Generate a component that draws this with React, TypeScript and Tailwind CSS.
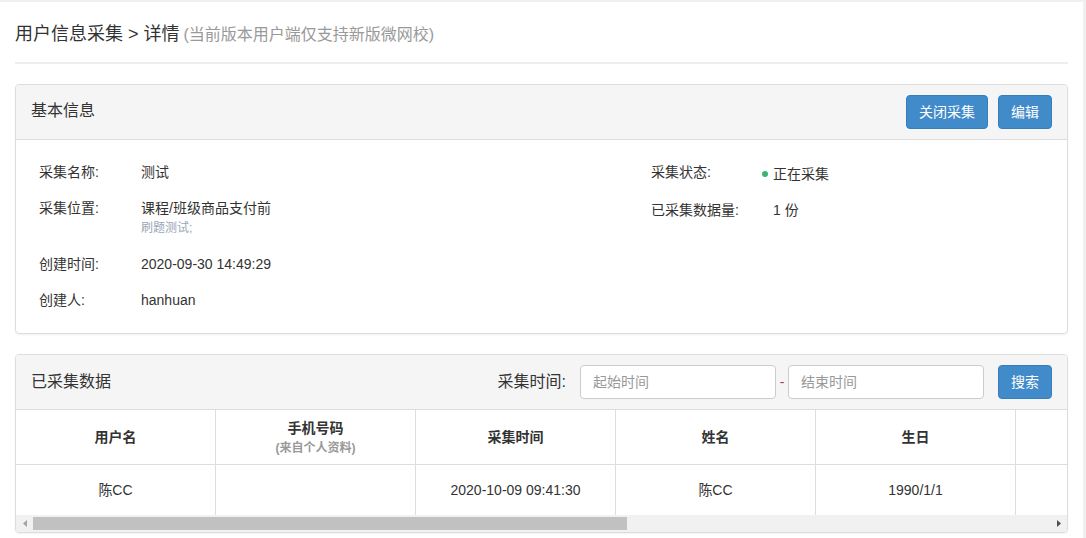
const font = { fontFamily: '"Liberation Sans", "Noto Sans CJK SC", sans-serif' }

function Row({ label, labelW, children }: { label: string; labelW: string; children: React.ReactNode }) {
  return (
    <div className="flex py-[8px]">
      <div className={`${labelW} shrink-0 leading-[20px] text-[#333]`}>{label}</div>
      <div className="leading-[20px] text-[#333]">{children}</div>
    </div>
  )
}

const columns = ["用户名", "手机号码", "采集时间", "姓名", "生日", "", "", "", ""]
const row = ["陈CC", "", "2020-10-09 09:41:30", "陈CC", "1990/1/1", "", "", "", ""]

export default function App() {
  return (
    <div className="h-[538px] bg-[#f0f0f0] pt-[2px] pr-[3px] text-[14px]" style={font}>
      <div className="h-full bg-white px-[15px] pr-[15px]">
        {/* 标题 */}
        <div className="pt-[19px] pb-[14px] border-b-2 border-[#eee]">
          <div className="leading-[26px]">
            <span className="text-[18px] text-[#333]">用户信息采集 &gt; 详情</span>{" "}
            <span className="text-[16px] text-[#999]">(当前版本用户端仅支持新版微网校)</span>
          </div>
        </div>

        {/* 基本信息 */}
        <div className="mt-[20px] border border-[#ddd] rounded-[4px] shadow-[0_1px_2px_rgba(0,0,0,0.06)]">
          <div className="h-[55px] bg-[#f5f5f5] border-b border-[#ddd] rounded-t-[4px] flex items-center justify-between px-[15px]">
            <div className="text-[16px] text-[#333] leading-[20px] -mt-[3px]">基本信息</div>
            <div className="flex gap-[10px]">
              <button className="h-[34px] px-[12px] bg-[#428bca] border border-[#357ebd] rounded-[4px] text-white text-[14px]">
                关闭采集
              </button>
              <button className="h-[34px] px-[12px] bg-[#428bca] border border-[#357ebd] rounded-[4px] text-white text-[14px]">
                编辑
              </button>
            </div>
          </div>
          <div className="flex pl-[23px] pt-[14px] pb-[15px]">
            <div className="w-[612px]">
              <Row label="采集名称:" labelW="w-[102px]">测试</Row>
              <div className="flex pt-[8px] pb-[8px]">
                <div className="w-[102px] shrink-0 leading-[20px] text-[#333]">采集位置:</div>
                <div>
                  <div className="leading-[20px] text-[#333]">课程/班级商品支付前</div>
                  <div className="leading-[20px] text-[12px] text-[#9aa5b8]">刷题测试;</div>
                </div>
              </div>
              <Row label="创建时间:" labelW="w-[102px]">2020-09-30 14:49:29</Row>
              <Row label="创建人:" labelW="w-[102px]">hanhuan</Row>
            </div>
            <div>
              <Row label="采集状态:" labelW="w-[111px]">
                <span className="inline-flex items-center">
                  <span className="w-[6px] h-[6px] rounded-full bg-[#3cb371] mr-[5px]" />
                  正在采集
                </span>
              </Row>
              <Row label="已采集数据量:" labelW="w-[122px]">1 份</Row>
            </div>
          </div>
        </div>

        {/* 已采集数据 */}
        <div className="mt-[20px] border border-[#ddd] rounded-[4px] shadow-[0_1px_2px_rgba(0,0,0,0.06)] overflow-hidden">
          <div className="h-[55px] bg-[#f5f5f5] border-b border-[#ddd] flex items-center justify-between pl-[15px] pr-[15px]">
            <div className="text-[16px] text-[#333] leading-[20px]">已采集数据</div>
            <div className="flex items-center">
              <span className="text-[16px] text-[#333] mr-[14px]">采集时间:</span>
              <input
                className="w-[196px] h-[34px] border border-[#ccc] rounded-[4px] bg-white px-[12px] text-[14px] placeholder:text-[#999] outline-none"
                placeholder="起始时间"
              />
              <span className="w-[12px] text-center text-[#a94442]">-</span>
              <input
                className="w-[196px] h-[34px] border border-[#ccc] rounded-[4px] bg-white px-[12px] text-[14px] placeholder:text-[#999] outline-none"
                placeholder="结束时间"
              />
              <button className="ml-[14px] h-[34px] px-[12px] bg-[#428bca] border border-[#357ebd] rounded-[4px] text-white text-[14px]">
                搜索
              </button>
            </div>
          </div>
          <div className="overflow-hidden">
            <div className="w-[1800px]">
              <div className="flex h-[55px] border-b border-[#ddd]">
                {columns.map((c, i) => (
                  <div
                    key={i}
                    className="w-[200px] shrink-0 border-r border-[#ddd] flex flex-col items-center justify-center font-bold text-[#333]"
                  >
                    {c}
                    {i === 1 && <span className="text-[12px] text-[#999] leading-[18px]">(来自个人资料)</span>}
                  </div>
                ))}
              </div>
              <div className="flex h-[50px]">
                {row.map((c, i) => (
                  <div key={i} className="w-[200px] shrink-0 border-r border-[#ddd] flex items-center justify-center text-[#333]">
                    {c}
                  </div>
                ))}
              </div>
            </div>
          </div>
          {/* 滚动条 */}
          <div className="h-[17px] bg-[#f1f1f1] flex items-center">
            <div className="w-[17px] h-full flex items-center justify-center">
              <svg width="4" height="7" viewBox="0 0 4 7">
                <path d="M4 0v7L0 3.5z" fill="#a3a3a3" />
              </svg>
            </div>
            <div className="flex-1 h-full py-[2px]">
              <div className="w-[594px] h-full bg-[#c1c1c1]" />
            </div>
            <div className="w-[17px] h-full flex items-center justify-center">
              <svg width="4" height="7" viewBox="0 0 4 7">
                <path d="M0 0v7l4-3.5z" fill="#505050" />
              </svg>
            </div>
          </div>
        </div>
      </div>
    </div>
  )
}
